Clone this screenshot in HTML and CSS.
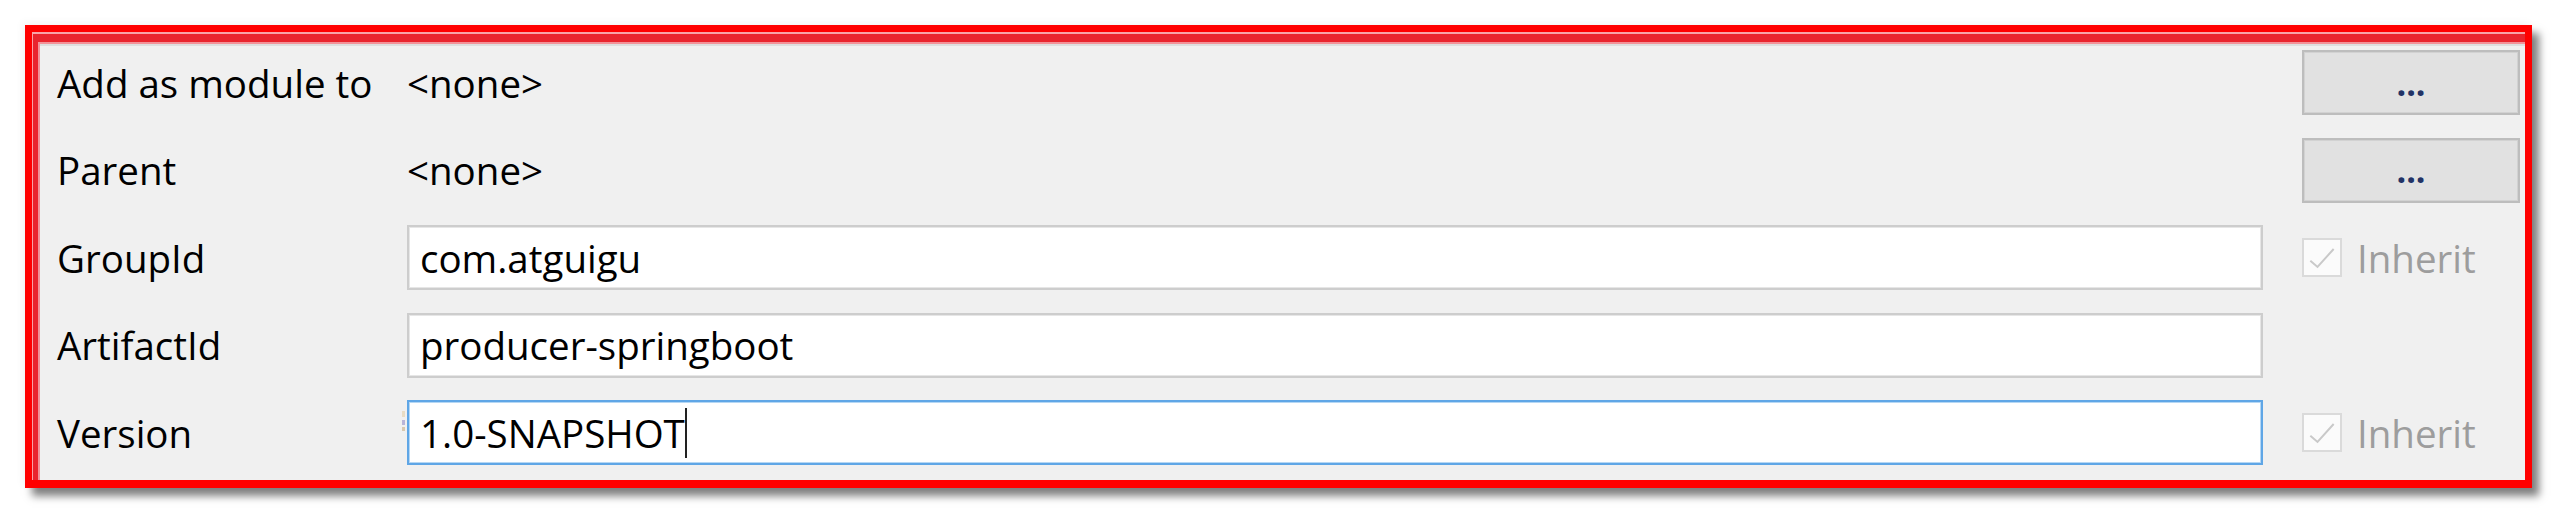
FILE: index.html
```html
<!DOCTYPE html>
<html lang="en">
<head>
<meta charset="utf-8">
<title>New Module</title>
<link rel="stylesheet" href="styles.css">
</head>
<body>
<div class="frame">
  <div class="edge-outer">
    <div class="edge-mid">
      <div class="panel">
        <div class="form">
          <div class="label">Add as module to</div>
          <div class="value">&lt;none&gt;</div>
          <button class="btn" type="button">...</button>

          <div class="label">Parent</div>
          <div class="value">&lt;none&gt;</div>
          <button class="btn" type="button">...</button>

          <div class="label">GroupId</div>
          <div class="field">com.atguigu</div>
          <label class="check"><span class="box"><svg viewBox="0 0 40 39" width="40" height="39"><path d="M7 23 L15 30 L33 10" fill="none" stroke="#c9c9c9" stroke-width="2.2"/></svg></span><span class="check-text">Inherit</span></label>

          <div class="label">ArtifactId</div>
          <div class="field">producer-springboot</div>
          <div class="empty"></div>

          <div class="label">Version</div>
          <div class="field focused"><span class="typed">1.0-SNAPSHOT</span><span class="caret"></span></div>
          <label class="check"><span class="box"><svg viewBox="0 0 40 39" width="40" height="39"><path d="M7 23 L15 30 L33 10" fill="none" stroke="#c9c9c9" stroke-width="2.2"/></svg></span><span class="check-text">Inherit</span></label>
        </div>
      </div>
    </div>
  </div>
</div>
</body>
</html>
```

FILE: styles.css
```css
* { box-sizing: border-box; }

html, body {
  margin: 0;
  padding: 0;
  background: #ffffff;
}

body {
  width: 2560px;
  height: 516px;
  overflow: hidden;
  font-family: "Segoe UI", "Open Sans", "Noto Sans", sans-serif;
  color: #000000;
}

.frame {
  margin: 25px 0 0 25px;
  width: 2507px;
  height: 463px;
  border: 7px solid #ff0000;
  border-bottom-width: 8px;
  box-shadow: 7px 8px 8px rgba(0, 0, 0, 0.5), -3px -3px 8px rgba(0, 0, 0, 0.04);
  display: flex;
}

.edge-outer {
  flex: 1;
  display: flex;
  border-top: 2px solid #f7a4a8;
  border-left: 1px solid #f7a4a8;
}

.edge-mid {
  flex: 1;
  display: flex;
  border-top: 8px solid #e9252e;
  border-left: 5px solid #e9252e;
}

.panel {
  flex: 1;
  background: #f0f0f0;
  border-top: 2px solid #f29298;
  border-left: 2px solid #f29298;
  box-shadow: inset 0 2px 0 #dedede;
}

.form {
  display: grid;
  grid-template-columns: 350px 1856px 257px;
  grid-auto-rows: 65px;
  row-gap: 22.5px;
  padding: 6px 0 0 17px;
  font-size: 38.5px;
}

.form > .btn,
.form > .check,
.form > .empty {
  margin-left: 39px;
}

.label,
.value {
  display: flex;
  align-items: center;
  white-space: nowrap;
}

.field {
  display: flex;
  align-items: center;
  height: 65px;
  padding-left: 11px;
  background: #ffffff;
  border: 2px solid #cdcdcd;
  box-shadow: inset 0 0 0 1px #e6e6e6;
  white-space: nowrap;
}

.field.focused {
  position: relative;
  border-color: #5fa6e6;
  box-shadow: inset 0 0 0 1px #b5d7f4;
}

.field.focused::before {
  content: "";
  position: absolute;
  left: -7px;
  top: 9px;
  width: 3px;
  height: 20px;
  background: linear-gradient(#e8dcc4 0 30%, transparent 30% 45%, #b8b4d8 45% 70%, transparent 70% 80%, #d8c8b0 80%);
}

.caret {
  display: inline-block;
  width: 2px;
  height: 50px;
  background: #222222;
}

.btn {
  width: 218px;
  height: 65px;
  padding: 0;
  background: #e1e1e1;
  border: 2px solid #bdbdbd;
  box-shadow: inset 0 0 0 1px #d2d2d2;
  font-family: inherit;
  font-size: 34px;
  font-weight: 700;
  color: #223366;
  line-height: 1;
  display: flex;
  align-items: center;
  justify-content: center;
}

.check {
  display: flex;
  align-items: center;
  gap: 15px;
  color: #9d9d9d;
}

.box {
  width: 40px;
  height: 39px;
  border: 2px solid #dadada;
  background: #fbfbfb;
  display: flex;
}

.box svg {
  display: block;
  width: 36px;
  height: 35px;
}

.check-text {
  white-space: nowrap;
}
```
